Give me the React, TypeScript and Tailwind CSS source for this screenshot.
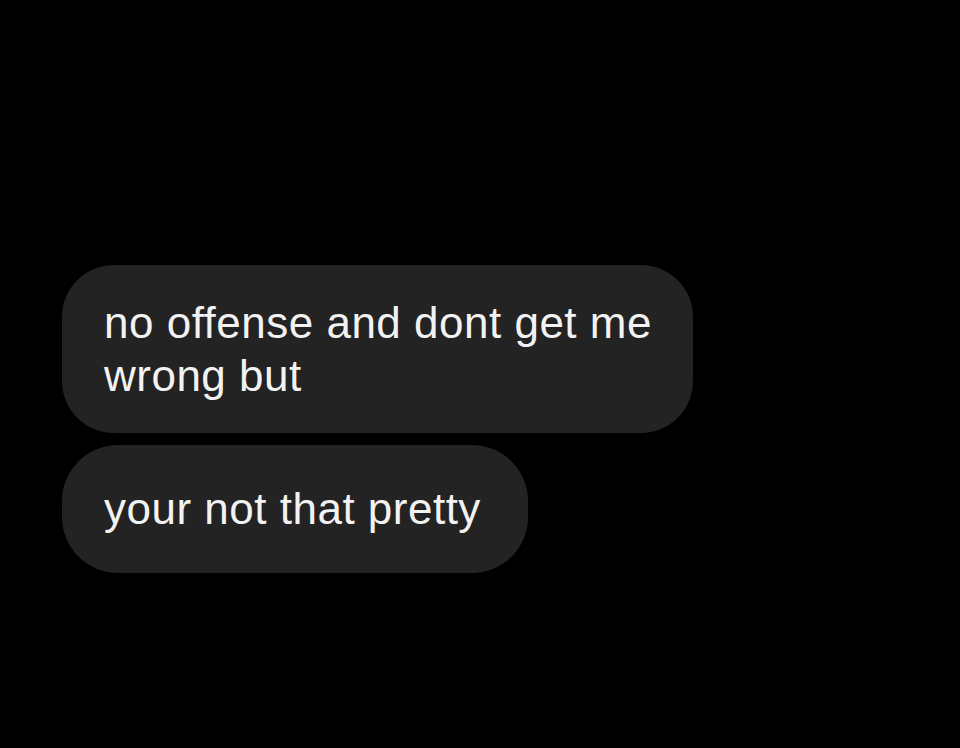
import React from "react";

export default function App() {
  return (
    <div
      className="w-[960px] h-[748px] bg-black flex flex-col items-start pt-[265px] pl-[62px] gap-[12px]"
      style={{ fontFamily: '"Liberation Sans", Arial, sans-serif' }}
    >
      <div className="w-[631px] h-[168px] bg-[#232323] rounded-[52px] pl-[42px] pr-[30px] pt-[31px] text-[44px] leading-[53px] tracking-[0.5px] text-[#f2f2f2]">
        no offense and dont get me
        <br />
        wrong but
      </div>
      <div className="w-[466px] h-[128px] bg-[#232323] rounded-[56px] pl-[42px] pt-[37px] text-[44px] leading-[53px] tracking-[0.5px] text-[#f2f2f2]">
        your not that pretty
      </div>
    </div>
  );
}
